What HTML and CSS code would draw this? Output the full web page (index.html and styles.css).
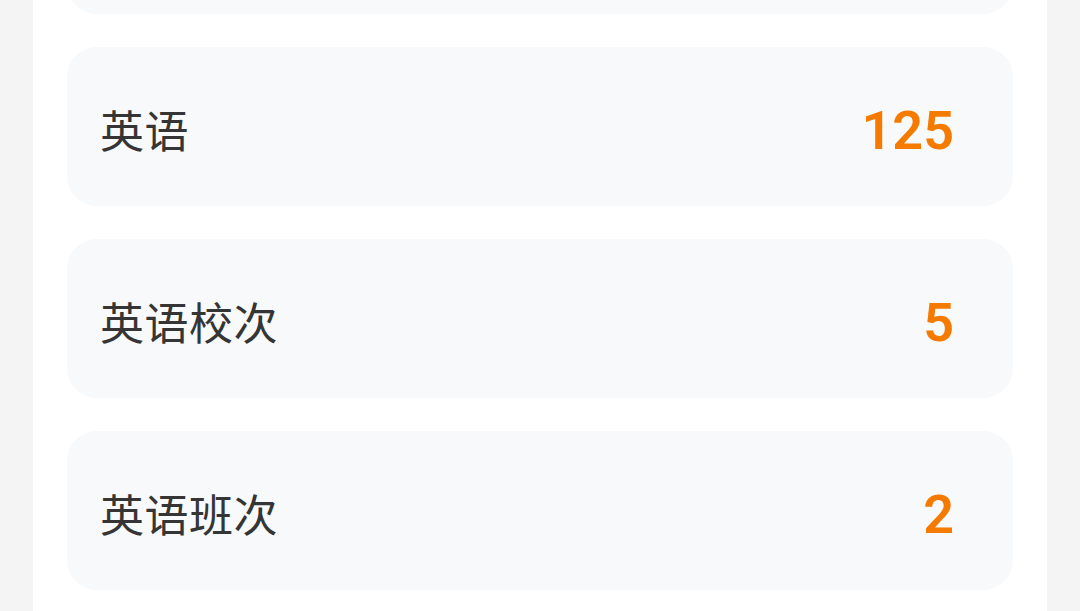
FILE: index.html
```html
<!DOCTYPE html>
<html lang="zh-CN">
<head>
<meta charset="utf-8">
<link rel="stylesheet" href="styles.css">
</head>
<body>
<div class="panel">
  <div class="list">
    <div class="card"></div>
    <div class="card"><span class="label">英语</span><span class="value">125</span></div>
    <div class="card"><span class="label">英语校次</span><span class="value">5</span></div>
    <div class="card"><span class="label">英语班次</span><span class="value">2</span></div>
  </div>
</div>
</body>
</html>
```
FILE: styles.css
```css
html, body {
  margin: 0;
  padding: 0;
  height: 100%;
  overflow: hidden;
}
body {
  background: #f4f4f4;
}
.panel {
  display: flex;
  flex-direction: column;
  margin: 0 33px;
  background: #ffffff;
  padding: 0 34px;
  height: 100%;
}
.list {
  display: flex;
  flex-direction: column;
  gap: 33px;
  margin-top: -145px;
}
.card {
  flex: none;
  height: 159px;
  box-sizing: border-box;
  background: #f8f9fb;
  border-radius: 30px;
  display: flex;
  align-items: center;
  justify-content: space-between;
  padding: 5px 59px 0 33px;
}
.label {
  font-family: "Noto Sans CJK SC", "Noto Sans", sans-serif;
  font-size: 44px;
  letter-spacing: 0.5px;
  color: #353535;
}
.value {
  font-family: Roboto, "Liberation Sans", sans-serif;
  font-weight: 600;
  font-size: 54px;
  color: #f57a00;
  position: relative;
  top: 1px;
}
```
